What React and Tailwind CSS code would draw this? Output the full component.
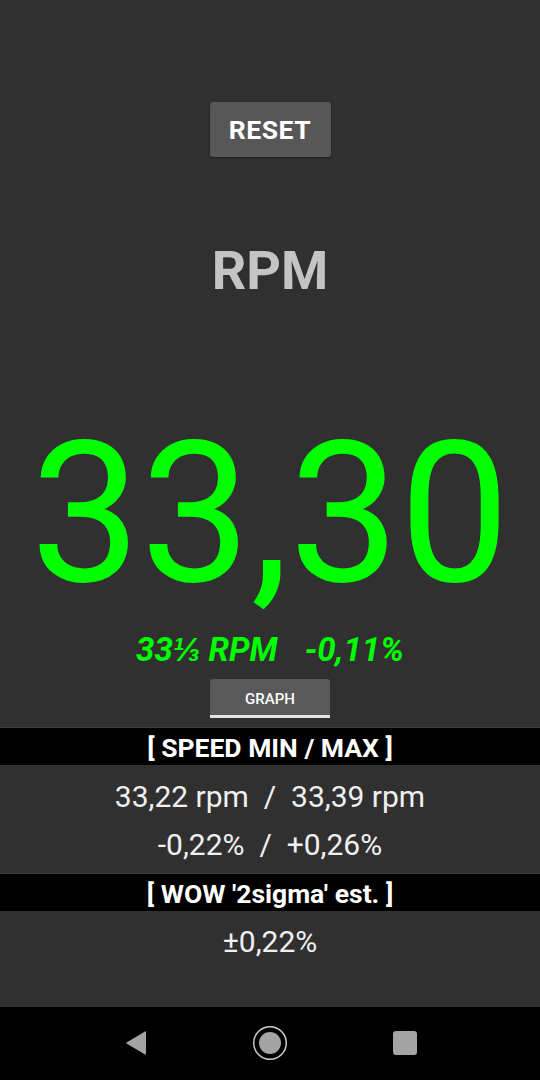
import React from "react";

const App = () => {
  return (
    <div
      className="h-[1080px] w-[540px] flex flex-col bg-[#303030] overflow-hidden"
      style={{ fontFamily: "Roboto, 'Liberation Sans', sans-serif" }}
    >
      {/* Reset */}
      <div className="pt-[102px] flex justify-center">
        <button className="w-[121px] h-[55px] rounded-[3px] bg-[#575757] text-white text-[26.5px] font-bold tracking-[0.5px] shadow-[0_1px_2px_rgba(0,0,0,0.4)]">
          RESET
        </button>
      </div>

      {/* Title */}
      <div className="mt-[84px] h-[60px] flex items-center justify-center text-[54px] leading-none font-bold text-[#c4c4c4]">
        RPM
      </div>

      {/* Big reading */}
      <div className="mt-[113px] h-[200px] flex items-center justify-center text-[196px] leading-none text-[#00ff00]">
        33,30
      </div>

      {/* Nominal + deviation */}
      <div className="mt-[15px] h-[40px] flex items-center justify-center gap-[27px] text-[33px] leading-none font-bold italic text-[#00ff00]">
        <span>33⅓ RPM</span>
        <span>-0,11%</span>
      </div>

      {/* Graph tab */}
      <div className="mt-[10px] flex justify-center">
        <button className="w-[120px] h-[39px] rounded-t-[3px] bg-[#595959] border-b-[3px] border-[#e4e4e4] text-white text-[15px] font-medium pt-[5px]">
          GRAPH
        </button>
      </div>

      {/* Speed min / max */}
      <div className="mt-[9px] border-t border-[#3f3f3f] h-[38px] pt-[3px] bg-black flex items-center justify-center text-white text-[26.5px] font-bold">
        [ SPEED MIN / MAX ]
      </div>
      <div className="pt-[7px] pb-[5px] text-[#f0f0f0] text-[30px]">
        <div className="h-[48px] flex items-center justify-center whitespace-pre">
          33,22 rpm  /  33,39 rpm
        </div>
        <div className="h-[48px] flex items-center justify-center whitespace-pre">
          -0,22%  /  +0,26%
        </div>
      </div>

      {/* Wow */}
      <div className="border-t border-[#3f3f3f] h-[38px] pt-[3px] bg-black flex items-center justify-center text-white text-[26.5px] font-bold">
        [ WOW '2sigma' est. ]
      </div>
      <div className="pt-[6px] text-[#f0f0f0] text-[30px]">
        <div className="h-[48px] flex items-center justify-center">±0,22%</div>
      </div>

      {/* Nav bar */}
      <div className="mt-auto h-[73px] bg-black flex items-center justify-center gap-[105px] pb-[1px]">
        <svg width="22" height="26" viewBox="0 0 22 26" className="ml-[1px]">
          <path d="M20 1.5 L1.5 12.5 Q0.5 13 1.5 13.5 L20 24.5 Q21 25 21 24 L21 2 Q21 1 20 1.5 Z" fill="#a3a3a3" />
        </svg>
        <svg width="36" height="36" viewBox="0 0 36 36">
          <circle cx="18" cy="18" r="16.3" fill="none" stroke="#d0d0d0" strokeWidth="1.5" />
          <circle cx="18" cy="18" r="11" fill="#a3a3a3" />
        </svg>
        <div className="w-[24px] h-[24px] rounded-[3px] bg-[#a3a3a3]" />
      </div>
    </div>
  );
};

export default App;
